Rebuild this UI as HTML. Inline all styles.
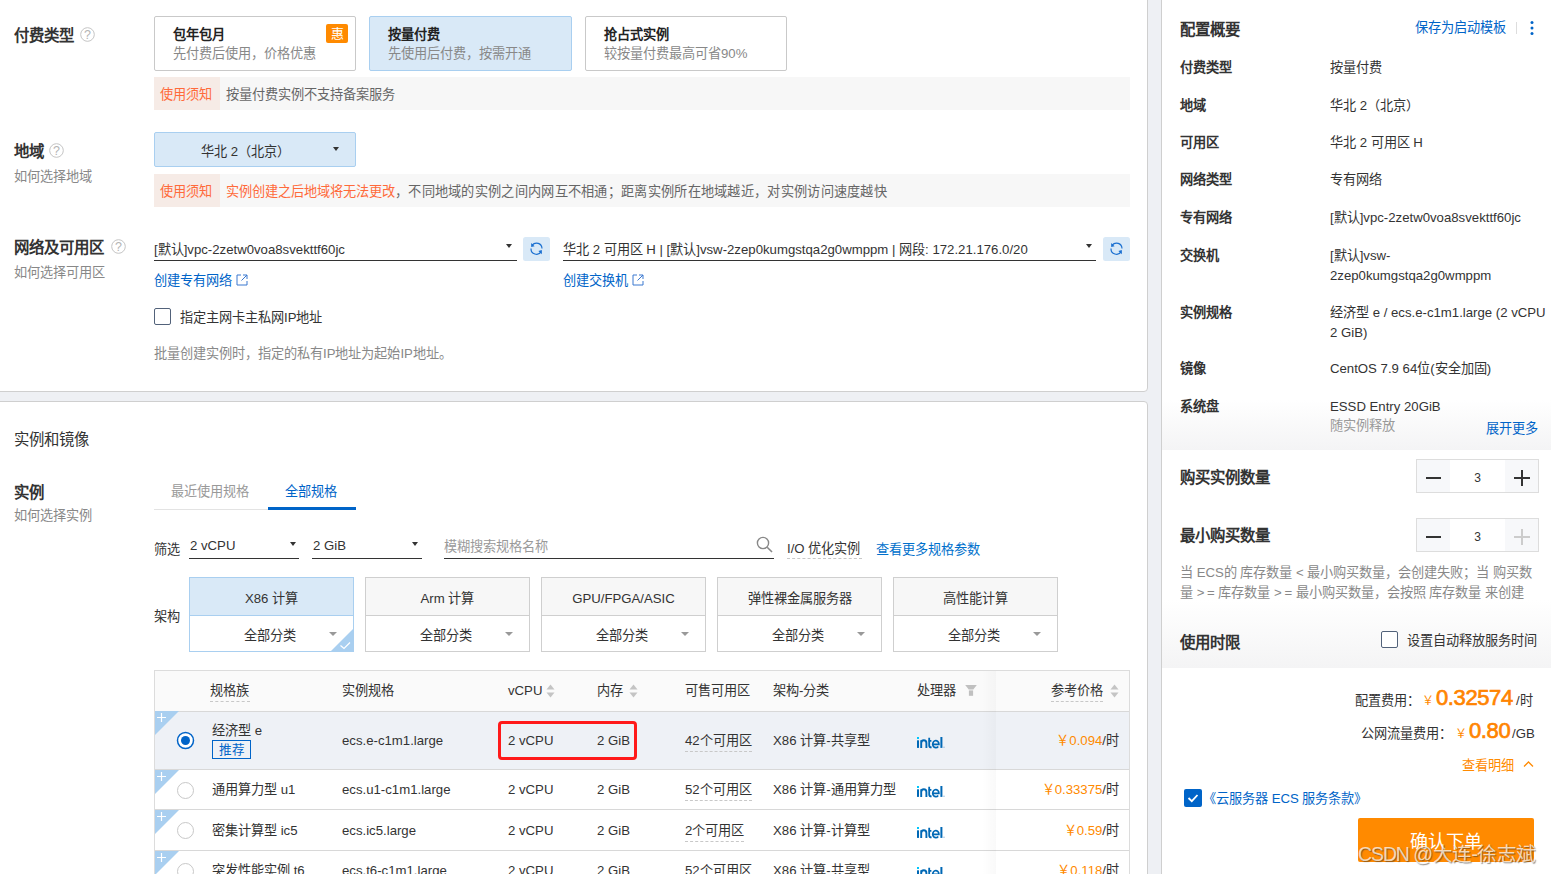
<!DOCTYPE html>
<html lang="zh-CN"><head><meta charset="utf-8">
<style>
*{box-sizing:border-box}
html,body{margin:0;padding:0}
body{width:1551px;height:874px;overflow:hidden;position:relative;background:#eef0f4;font-family:"Liberation Sans",sans-serif;color:#333;font-size:13.2px}
.a{position:absolute}
.t{position:absolute;white-space:nowrap;line-height:1}
.card{position:absolute;background:#fff;border:1px solid #cfcfcf}
.lbl{font-size:15.4px;font-weight:bold;color:#333}
.sub{color:#888}
.blue{color:#0064c8}
.q{display:inline-block;width:14px;height:14px;border:1px solid #bbb;border-radius:50%;color:#aaa;font-size:11px;line-height:12px;text-align:center;font-weight:normal;vertical-align:top}
</style></head><body>

<!-- card 1 -->
<div class="card" style="left:-5px;top:-10px;width:1153px;height:402px;border-radius:0 0 4px 4px"></div>
<!-- card 2 -->
<div class="card" style="left:-5px;top:401px;width:1153px;height:500px;border-radius:4px 4px 0 0"></div>
<!-- right panel -->
<div class="a" style="left:1161px;top:-5px;width:400px;height:900px;background:#fff;border-left:1px solid #cfcfcf"></div>

<!-- ===== Section: 付费类型 ===== -->
<div class="t lbl" style="left:14px;top:28px">付费类型</div>
<svg class="a" style="left:80px;top:27px" width="15" height="15" viewBox="0 0 15 15"><circle cx="7.5" cy="7.5" r="6.8" fill="none" stroke="#c4c4c4" stroke-width="1"/><text x="7.5" y="12" text-anchor="middle" font-size="12.5" fill="#b4b4b4" font-family="Liberation Sans">?</text></svg>

<div class="a" style="left:154px;top:16px;width:202px;height:55px;border:1px solid #c9c9c9;border-radius:2px;background:#fff"></div>
<div class="t" style="left:173px;top:28px;font-weight:bold;color:#222">包年包月</div>
<div class="t sub" style="left:173px;top:47px;color:#888">先付费后使用，价格优惠</div>
<div class="a" style="left:326px;top:24px;width:22px;height:19px;background:#ff8a00;border-radius:2px;color:#fff;font-size:13px;line-height:19px;text-align:center">惠</div>

<div class="a" style="left:369px;top:16px;width:203px;height:55px;border:1px solid #a9cff0;border-radius:2px;background:#d9e9f7"></div>
<div class="t" style="left:388px;top:28px;font-weight:bold;color:#222">按量付费</div>
<div class="t" style="left:388px;top:47px;color:#888">先使用后付费，按需开通</div>

<div class="a" style="left:585px;top:16px;width:202px;height:55px;border:1px solid #c9c9c9;border-radius:2px;background:#fff"></div>
<div class="t" style="left:604px;top:28px;font-weight:bold;color:#222">抢占式实例</div>
<div class="t" style="left:604px;top:47px;color:#888">较按量付费最高可省90%</div>

<div class="a" style="left:154px;top:77px;width:976px;height:33px;background:#f7f7f7"></div>
<div class="a" style="left:154px;top:77px;width:66px;height:33px;background:#f6ebe6"></div>
<div class="t" style="left:160px;top:88px;color:#ff6a3a">使用须知</div>
<div class="t" style="left:226px;top:88px;color:#666">按量付费实例不支持备案服务</div>

<!-- ===== Section: 地域 ===== -->
<div class="t lbl" style="left:14px;top:144px">地域</div>
<svg class="a" style="left:49px;top:143px" width="15" height="15" viewBox="0 0 15 15"><circle cx="7.5" cy="7.5" r="6.8" fill="none" stroke="#c4c4c4" stroke-width="1"/><text x="7.5" y="12" text-anchor="middle" font-size="12.5" fill="#b4b4b4" font-family="Liberation Sans">?</text></svg>
<div class="t" style="left:14px;top:170px;color:#888">如何选择地域</div>
<div class="a" style="left:154px;top:132px;width:202px;height:35px;border:1px solid #a9cff0;border-radius:2px;background:#d9e9f7"></div>
<div class="t" style="left:201px;top:145px;color:#333">华北 2（北京）</div>
<div class="a" style="left:333px;top:147px;width:0;height:0;border-left:3.5px solid transparent;border-right:3.5px solid transparent;border-top:4px solid #333"></div>

<div class="a" style="left:154px;top:174px;width:976px;height:33px;background:#f7f7f7"></div>
<div class="a" style="left:154px;top:174px;width:66px;height:33px;background:#f6ebe6"></div>
<div class="t" style="left:160px;top:185px;color:#ff6a3a">使用须知</div>
<div class="t" style="left:226px;top:185px;color:#666"><span style="color:#ff6a3a">实例创建之后地域将无法更改</span><span style="letter-spacing:0.3px">，不同地域的实例之间内网互不相通；距离实例所在地域越近，对实例访问速度越快</span></div>

<!-- ===== Section: 网络及可用区 ===== -->
<div class="t lbl" style="left:14px;top:240px">网络及可用区</div>
<svg class="a" style="left:111px;top:239px" width="15" height="15" viewBox="0 0 15 15"><circle cx="7.5" cy="7.5" r="6.8" fill="none" stroke="#c4c4c4" stroke-width="1"/><text x="7.5" y="12" text-anchor="middle" font-size="12.5" fill="#b4b4b4" font-family="Liberation Sans">?</text></svg>
<div class="t" style="left:14px;top:266px;color:#888">如何选择可用区</div>

<div class="t" style="left:154px;top:243px;color:#333">[默认]vpc-2zetw0voa8svekttf60jc</div>
<div class="a" style="left:154px;top:260px;width:363px;height:1px;background:#333"></div>
<div class="a" style="left:506px;top:244px;width:0;height:0;border-left:3.5px solid transparent;border-right:3.5px solid transparent;border-top:4px solid #333"></div>
<div class="a" style="left:523px;top:237px"><svg width="27" height="24" viewBox="0 0 27 24"><rect width="27" height="24" rx="2.5" fill="#d9e9f7"/><path d="M19 11.5 A5.5 5.5 0 0 0 9.2 8.2" fill="none" stroke="#1a6fd0" stroke-width="1.15"/><path d="M8 11.5 A5.5 5.5 0 0 0 18.2 14.6" fill="none" stroke="#1a6fd0" stroke-width="1.15"/><path d="M8.2 6 L8.2 10 L11.6 9.2 Z" fill="#1a6fd0"/><path d="M18.8 17.2 L18.8 13 L15.4 14 Z" fill="#1a6fd0"/></svg></div>

<div class="t" style="left:563px;top:243px;color:#333">华北 2 可用区 H | [默认]vsw-2zep0kumgstqa2g0wmppm | 网段: 172.21.176.0/20</div>
<div class="a" style="left:563px;top:260px;width:533px;height:1px;background:#333"></div>
<div class="a" style="left:1086px;top:244px;width:0;height:0;border-left:3.5px solid transparent;border-right:3.5px solid transparent;border-top:4px solid #333"></div>
<div class="a" style="left:1103px;top:237px"><svg width="27" height="24" viewBox="0 0 27 24"><rect width="27" height="24" rx="2.5" fill="#d9e9f7"/><path d="M19 11.5 A5.5 5.5 0 0 0 9.2 8.2" fill="none" stroke="#1a6fd0" stroke-width="1.15"/><path d="M8 11.5 A5.5 5.5 0 0 0 18.2 14.6" fill="none" stroke="#1a6fd0" stroke-width="1.15"/><path d="M8.2 6 L8.2 10 L11.6 9.2 Z" fill="#1a6fd0"/><path d="M18.8 17.2 L18.8 13 L15.4 14 Z" fill="#1a6fd0"/></svg></div>

<div class="t" style="left:154px;top:274px;color:#0064c8">创建专有网络 <svg width="12" height="12" viewBox="0 0 12 12" style="vertical-align:top"><path d="M5 1 H1 V11 H11 V7" fill="none" stroke="#3a78d0" stroke-width="1"/><path d="M7 1 H11 V5 M11 1 L5.5 6.5" fill="none" stroke="#3a78d0" stroke-width="1"/></svg></div>
<div class="t" style="left:563px;top:274px;color:#0064c8">创建交换机 <svg width="12" height="12" viewBox="0 0 12 12" style="vertical-align:top"><path d="M5 1 H1 V11 H11 V7" fill="none" stroke="#3a78d0" stroke-width="1"/><path d="M7 1 H11 V5 M11 1 L5.5 6.5" fill="none" stroke="#3a78d0" stroke-width="1"/></svg></div>

<div class="a" style="left:154px;top:308px;width:17px;height:17px;border:1px solid #52627a;border-radius:2px;background:#fff"></div>
<div class="t" style="left:180px;top:311px;color:#333">指定主网卡主私网IP地址</div>
<div class="t" style="left:154px;top:347px;color:#888">批量创建实例时，指定的私有IP地址为起始IP地址。</div>

<!-- ===== Section: 实例和镜像 ===== -->
<div class="t" style="left:14px;top:432px;font-size:15.4px;color:#333">实例和镜像</div>
<div class="t lbl" style="left:14px;top:485px">实例</div>
<div class="t" style="left:14px;top:509px;color:#888">如何选择实例</div>

<div class="a" style="left:154px;top:509px;width:202px;height:1px;background:#e3e3e3"></div>
<div class="a" style="left:268px;top:507px;width:88px;height:3px;background:#0064c8"></div>
<div class="t" style="left:171px;top:485px;color:#999">最近使用规格</div>
<div class="t" style="left:285px;top:485px;color:#0064c8">全部规格</div>

<div class="t" style="left:154px;top:543px;color:#333">筛选</div>
<div class="t" style="left:190px;top:539px;color:#333">2 vCPU</div>
<div class="a" style="left:189px;top:558px;width:110px;height:1px;background:#333"></div>
<div class="a" style="left:290px;top:542px;width:0;height:0;border-left:3.5px solid transparent;border-right:3.5px solid transparent;border-top:4px solid #333"></div>
<div class="t" style="left:313px;top:539px;color:#333">2 GiB</div>
<div class="a" style="left:312px;top:558px;width:110px;height:1px;background:#333"></div>
<div class="a" style="left:412px;top:542px;width:0;height:0;border-left:3.5px solid transparent;border-right:3.5px solid transparent;border-top:4px solid #333"></div>
<div class="t" style="left:444px;top:540px;color:#999">模糊搜索规格名称</div>
<div class="a" style="left:444px;top:558px;width:330px;height:1px;background:#333"></div>
<svg class="a" style="left:755px;top:535px" width="20" height="20" viewBox="0 0 20 20"><circle cx="8" cy="8" r="5.6" fill="none" stroke="#888" stroke-width="1.4"/><path d="M12.2 12.2 L17 17" stroke="#888" stroke-width="1.6"/></svg>
<div class="t" style="left:787px;top:542px;color:#333">I/O 优化实例</div>
<div class="a" style="left:787px;top:558px;width:75px;height:0;border-top:1px dashed #c8c8c8"></div>
<div class="t" style="left:876px;top:543px;color:#0070cc">查看更多规格参数</div>

<div class="t" style="left:154px;top:610px;color:#333">架构</div>
<div class="a" style="left:189px;top:577px;width:165px;height:75px;border:1px solid #a9cff0;background:#fff"></div>
<div class="a" style="left:190px;top:578px;width:163px;height:38px;background:#d9e9f7;border-bottom:1px solid #a9cff0"></div>
<div class="t" style="left:189px;width:165px;text-align:center;top:592px;color:#333">X86 计算</div>
<div class="t" style="left:244px;top:629px;color:#333">全部分类</div>
<div class="a" style="left:329px;top:632px;width:0;height:0;border-left:4px solid transparent;border-right:4px solid transparent;border-top:4.5px solid #999"></div>
<div class="a" style="left:365px;top:577px;width:165px;height:75px;border:1px solid #cfcfcf;background:#fff"></div>
<div class="a" style="left:366px;top:578px;width:163px;height:38px;background:#f7f7f7;border-bottom:1px solid #cfcfcf"></div>
<div class="t" style="left:365px;width:165px;text-align:center;top:592px;color:#333">Arm 计算</div>
<div class="t" style="left:420px;top:629px;color:#333">全部分类</div>
<div class="a" style="left:505px;top:632px;width:0;height:0;border-left:4px solid transparent;border-right:4px solid transparent;border-top:4.5px solid #999"></div>
<div class="a" style="left:541px;top:577px;width:165px;height:75px;border:1px solid #cfcfcf;background:#fff"></div>
<div class="a" style="left:542px;top:578px;width:163px;height:38px;background:#f7f7f7;border-bottom:1px solid #cfcfcf"></div>
<div class="t" style="left:541px;width:165px;text-align:center;top:592px;color:#333">GPU/FPGA/ASIC</div>
<div class="t" style="left:596px;top:629px;color:#333">全部分类</div>
<div class="a" style="left:681px;top:632px;width:0;height:0;border-left:4px solid transparent;border-right:4px solid transparent;border-top:4.5px solid #999"></div>
<div class="a" style="left:717px;top:577px;width:165px;height:75px;border:1px solid #cfcfcf;background:#fff"></div>
<div class="a" style="left:718px;top:578px;width:163px;height:38px;background:#f7f7f7;border-bottom:1px solid #cfcfcf"></div>
<div class="t" style="left:717px;width:165px;text-align:center;top:592px;color:#333">弹性裸金属服务器</div>
<div class="t" style="left:772px;top:629px;color:#333">全部分类</div>
<div class="a" style="left:857px;top:632px;width:0;height:0;border-left:4px solid transparent;border-right:4px solid transparent;border-top:4.5px solid #999"></div>
<div class="a" style="left:893px;top:577px;width:165px;height:75px;border:1px solid #cfcfcf;background:#fff"></div>
<div class="a" style="left:894px;top:578px;width:163px;height:38px;background:#f7f7f7;border-bottom:1px solid #cfcfcf"></div>
<div class="t" style="left:893px;width:165px;text-align:center;top:592px;color:#333">高性能计算</div>
<div class="t" style="left:948px;top:629px;color:#333">全部分类</div>
<div class="a" style="left:1033px;top:632px;width:0;height:0;border-left:4px solid transparent;border-right:4px solid transparent;border-top:4.5px solid #999"></div>

<svg class="a" style="left:330px;top:628px" width="24" height="24" viewBox="0 0 24 24"><path d="M24 0 L24 24 L0 24 Z" fill="#a9cff0"/><path d="M10.5 17.5 L14 20.5 L20 14.5" fill="none" stroke="#fff" stroke-width="1.2"/></svg>

<!-- ===== Table ===== -->
<div class="a" style="left:154px;top:670px;width:976px;height:230px;border:1px solid #dcdcdc;background:#fff"></div>
<div class="a" style="left:155px;top:671px;width:974px;height:41px;background:#fafafa;border-bottom:1px solid #d8d8d8"></div>
<div class="a" style="left:155px;top:712px;width:974px;height:58px;background:#eef1f6;border-bottom:1px solid #d8d8d8"></div>
<div class="a" style="left:155px;top:770px;width:974px;height:40px;background:#fff;border-bottom:1px solid #d8d8d8"></div>
<div class="a" style="left:155px;top:810px;width:974px;height:41px;background:#fff;border-bottom:1px solid #d8d8d8"></div>
<div class="a" style="left:155px;top:851px;width:974px;height:41px;background:#fff;border-bottom:1px solid #d8d8d8"></div>
<div class="a" style="left:982px;top:671px;width:14px;height:230px;background:linear-gradient(to right,rgba(0,0,0,0),rgba(0,0,0,0.025))"></div>
<div class="t" style="left:210px;top:684px;color:#333">规格族</div>
<div class="a" style="left:210px;top:701px;width:40px;height:0;border-top:1px dashed #c8c8c8"></div>
<div class="t" style="left:342px;top:684px;color:#333">实例规格</div>
<div class="t" style="left:508px;top:684px;color:#333">vCPU</div>
<svg class="a" style="left:546px;top:684px" width="9" height="14" viewBox="0 0 9 14"><path d="M4.5 0.5 L8.5 5.5 L0.5 5.5 Z" fill="#c4c4c4"/><path d="M4.5 13.5 L8.5 8.5 L0.5 8.5 Z" fill="#c4c4c4"/></svg>
<div class="t" style="left:597px;top:684px;color:#333">内存</div>
<svg class="a" style="left:629px;top:684px" width="9" height="14" viewBox="0 0 9 14"><path d="M4.5 0.5 L8.5 5.5 L0.5 5.5 Z" fill="#c4c4c4"/><path d="M4.5 13.5 L8.5 8.5 L0.5 8.5 Z" fill="#c4c4c4"/></svg>
<div class="t" style="left:685px;top:684px;color:#333">可售可用区</div>
<div class="t" style="left:773px;top:684px;color:#333">架构-分类</div>
<div class="t" style="left:917px;top:684px;color:#333">处理器</div>
<svg class="a" style="left:965px;top:685px" width="12" height="11" viewBox="0 0 12 11"><path d="M0.2 0 H11.8 L8.3 4.6 H3.7 Z" fill="#c0c0c0"/><rect x="3.9" y="5.4" width="4.2" height="5.4" fill="#c0c0c0"/></svg>
<div class="t" style="left:1051px;top:684px;color:#333">参考价格</div>
<div class="a" style="left:1051px;top:701px;width:52px;height:0;border-top:1px dashed #c8c8c8"></div>
<svg class="a" style="left:1110px;top:684px" width="9" height="14" viewBox="0 0 9 14"><path d="M4.5 0.5 L8.5 5.5 L0.5 5.5 Z" fill="#c4c4c4"/><path d="M4.5 13.5 L8.5 8.5 L0.5 8.5 Z" fill="#c4c4c4"/></svg><svg class="a" style="left:155px;top:711px" width="24" height="24" viewBox="0 0 24 24"><path d="M0 0 L24 0 L0 24 Z" fill="#a9cff0"/><path d="M2 6.5 H11 M6.5 2 V11" stroke="#fff" stroke-width="1.2"/></svg><svg class="a" style="left:176px;top:731.0px" width="19" height="19" viewBox="0 0 19 19"><circle cx="9.5" cy="9.5" r="8" fill="#fff" stroke="#0064c8" stroke-width="1.5"/><circle cx="9.5" cy="9.5" r="4.5" fill="#0064c8"/></svg><div class="t" style="left:212px;top:724px;color:#333">经济型 e</div><div class="a" style="left:212px;top:740px;width:39px;height:19px;border:1px solid #0064c8;color:#0064c8;line-height:18px;text-align:center;font-size:12.6px">推荐</div><div class="t" style="left:342px;top:734px;color:#333">ecs.e-c1m1.large</div><div class="t" style="left:508px;top:734px;color:#333">2 vCPU</div><div class="t" style="left:597px;top:734px;color:#333">2 GiB</div><div class="t" style="left:685px;top:734px;color:#333;border-bottom:1px dashed #c8c8c8;padding-bottom:4px">42个可用区</div><div class="t" style="left:773px;top:734px;color:#333">X86 计算-共享型</div><svg class="a" style="left:916px;top:736px" width="30" height="14" viewBox="0 0 30 14"><rect x="1" y="1" width="2" height="2" fill="#00c7fd"/><rect x="1" y="4.3" width="2" height="7.6" fill="#0068b5"/><path d="M5.2 11.9 V4.3 M5.2 6.8 Q5.4 4.3 7.8 4.3 Q10.4 4.3 10.4 7 V11.9" fill="none" stroke="#0068b5" stroke-width="1.9"/><path d="M13.2 1.8 V9.4 Q13.2 11.4 15.6 11.4 M12.2 4.9 H15.4" fill="none" stroke="#0068b5" stroke-width="1.8"/><path d="M16.9 8.3 H22.9 A3.1 3.5 0 1 0 22.2 10.4" fill="none" stroke="#0068b5" stroke-width="1.7"/><rect x="24.4" y="1" width="2" height="10.9" fill="#0068b5"/><circle cx="28" cy="11.2" r="0.7" fill="#8fb8dd"/></svg><div class="t" style="right:432px;top:734px;color:#333"><span style="color:#ff8a00">￥0.094</span>/时</div>
<svg class="a" style="left:155px;top:770px" width="24" height="24" viewBox="0 0 24 24"><path d="M0 0 L24 0 L0 24 Z" fill="#a9cff0"/><path d="M2 6.5 H11 M6.5 2 V11" stroke="#fff" stroke-width="1.2"/></svg><svg class="a" style="left:176px;top:780.5px" width="19" height="19" viewBox="0 0 19 19"><circle cx="9.5" cy="9.5" r="8" fill="#fff" stroke="#c8c8c8" stroke-width="1"/></svg><div class="t" style="left:212px;top:783px;color:#333">通用算力型 u1</div><div class="t" style="left:342px;top:783px;color:#333">ecs.u1-c1m1.large</div><div class="t" style="left:508px;top:783px;color:#333">2 vCPU</div><div class="t" style="left:597px;top:783px;color:#333">2 GiB</div><div class="t" style="left:685px;top:783px;color:#333;border-bottom:1px dashed #c8c8c8;padding-bottom:4px">52个可用区</div><div class="t" style="left:773px;top:783px;color:#333">X86 计算-通用算力型</div><svg class="a" style="left:916px;top:785px" width="30" height="14" viewBox="0 0 30 14"><rect x="1" y="1" width="2" height="2" fill="#00c7fd"/><rect x="1" y="4.3" width="2" height="7.6" fill="#0068b5"/><path d="M5.2 11.9 V4.3 M5.2 6.8 Q5.4 4.3 7.8 4.3 Q10.4 4.3 10.4 7 V11.9" fill="none" stroke="#0068b5" stroke-width="1.9"/><path d="M13.2 1.8 V9.4 Q13.2 11.4 15.6 11.4 M12.2 4.9 H15.4" fill="none" stroke="#0068b5" stroke-width="1.8"/><path d="M16.9 8.3 H22.9 A3.1 3.5 0 1 0 22.2 10.4" fill="none" stroke="#0068b5" stroke-width="1.7"/><rect x="24.4" y="1" width="2" height="10.9" fill="#0068b5"/><circle cx="28" cy="11.2" r="0.7" fill="#8fb8dd"/></svg><div class="t" style="right:432px;top:783px;color:#333"><span style="color:#ff8a00">￥0.33375</span>/时</div>
<svg class="a" style="left:155px;top:810px" width="24" height="24" viewBox="0 0 24 24"><path d="M0 0 L24 0 L0 24 Z" fill="#a9cff0"/><path d="M2 6.5 H11 M6.5 2 V11" stroke="#fff" stroke-width="1.2"/></svg><svg class="a" style="left:176px;top:821.0px" width="19" height="19" viewBox="0 0 19 19"><circle cx="9.5" cy="9.5" r="8" fill="#fff" stroke="#c8c8c8" stroke-width="1"/></svg><div class="t" style="left:212px;top:824px;color:#333">密集计算型 ic5</div><div class="t" style="left:342px;top:824px;color:#333">ecs.ic5.large</div><div class="t" style="left:508px;top:824px;color:#333">2 vCPU</div><div class="t" style="left:597px;top:824px;color:#333">2 GiB</div><div class="t" style="left:685px;top:824px;color:#333;border-bottom:1px dashed #c8c8c8;padding-bottom:4px">2个可用区</div><div class="t" style="left:773px;top:824px;color:#333">X86 计算-计算型</div><svg class="a" style="left:916px;top:826px" width="30" height="14" viewBox="0 0 30 14"><rect x="1" y="1" width="2" height="2" fill="#00c7fd"/><rect x="1" y="4.3" width="2" height="7.6" fill="#0068b5"/><path d="M5.2 11.9 V4.3 M5.2 6.8 Q5.4 4.3 7.8 4.3 Q10.4 4.3 10.4 7 V11.9" fill="none" stroke="#0068b5" stroke-width="1.9"/><path d="M13.2 1.8 V9.4 Q13.2 11.4 15.6 11.4 M12.2 4.9 H15.4" fill="none" stroke="#0068b5" stroke-width="1.8"/><path d="M16.9 8.3 H22.9 A3.1 3.5 0 1 0 22.2 10.4" fill="none" stroke="#0068b5" stroke-width="1.7"/><rect x="24.4" y="1" width="2" height="10.9" fill="#0068b5"/><circle cx="28" cy="11.2" r="0.7" fill="#8fb8dd"/></svg><div class="t" style="right:432px;top:824px;color:#333"><span style="color:#ff8a00">￥0.59</span>/时</div>
<svg class="a" style="left:155px;top:851px" width="24" height="24" viewBox="0 0 24 24"><path d="M0 0 L24 0 L0 24 Z" fill="#a9cff0"/><path d="M2 6.5 H11 M6.5 2 V11" stroke="#fff" stroke-width="1.2"/></svg><svg class="a" style="left:176px;top:862.0px" width="19" height="19" viewBox="0 0 19 19"><circle cx="9.5" cy="9.5" r="8" fill="#fff" stroke="#c8c8c8" stroke-width="1"/></svg><div class="t" style="left:212px;top:864px;color:#333">突发性能实例 t6</div><div class="t" style="left:342px;top:864px;color:#333">ecs.t6-c1m1.large</div><div class="t" style="left:508px;top:864px;color:#333">2 vCPU</div><div class="t" style="left:597px;top:864px;color:#333">2 GiB</div><div class="t" style="left:685px;top:864px;color:#333;border-bottom:1px dashed #c8c8c8;padding-bottom:4px">52个可用区</div><div class="t" style="left:773px;top:864px;color:#333">X86 计算-共享型</div><svg class="a" style="left:916px;top:866px" width="30" height="14" viewBox="0 0 30 14"><rect x="1" y="1" width="2" height="2" fill="#00c7fd"/><rect x="1" y="4.3" width="2" height="7.6" fill="#0068b5"/><path d="M5.2 11.9 V4.3 M5.2 6.8 Q5.4 4.3 7.8 4.3 Q10.4 4.3 10.4 7 V11.9" fill="none" stroke="#0068b5" stroke-width="1.9"/><path d="M13.2 1.8 V9.4 Q13.2 11.4 15.6 11.4 M12.2 4.9 H15.4" fill="none" stroke="#0068b5" stroke-width="1.8"/><path d="M16.9 8.3 H22.9 A3.1 3.5 0 1 0 22.2 10.4" fill="none" stroke="#0068b5" stroke-width="1.7"/><rect x="24.4" y="1" width="2" height="10.9" fill="#0068b5"/><circle cx="28" cy="11.2" r="0.7" fill="#8fb8dd"/></svg><div class="t" style="right:432px;top:864px;color:#333"><span style="color:#ff8a00">￥0.118</span>/时</div>
<div class="a" style="left:498px;top:721px;width:139px;height:39px;border:3px solid #ff1a1a;border-radius:4px"></div>

<!-- ===== Right panel ===== -->
<div class="a" style="left:1162px;top:400px;width:389px;height:50px;background:linear-gradient(to bottom,rgba(245,245,245,0),#f4f4f5)"></div>
<div class="a" style="left:1162px;top:600px;width:389px;height:68px;background:linear-gradient(to bottom,rgba(245,245,245,0),#f4f4f5)"></div>
<div class="t" style="left:1180px;top:22px;font-size:15.4px;font-weight:bold;color:#333">配置概要</div>
<div class="t" style="left:1415px;top:21px;color:#0064c8">保存为启动模板</div>
<div class="a" style="left:1516px;top:22px;width:1px;height:12px;background:#ddd"></div>
<svg class="a" style="left:1529px;top:19.5px" width="6" height="16" viewBox="0 0 6 16"><circle cx="3" cy="2.5" r="1.5" fill="#0064c8"/><circle cx="3" cy="8" r="1.5" fill="#0064c8"/><circle cx="3" cy="13.5" r="1.5" fill="#0064c8"/></svg>
<div class="t" style="left:1180px;top:61px;font-weight:bold;color:#333">付费类型</div>
<div class="t" style="left:1330px;top:61px;color:#333">按量付费</div>
<div class="t" style="left:1180px;top:99px;font-weight:bold;color:#333">地域</div>
<div class="t" style="left:1330px;top:99px;color:#333">华北 2（北京）</div>
<div class="t" style="left:1180px;top:136px;font-weight:bold;color:#333">可用区</div>
<div class="t" style="left:1330px;top:136px;color:#333">华北 2 可用区 H</div>
<div class="t" style="left:1180px;top:173px;font-weight:bold;color:#333">网络类型</div>
<div class="t" style="left:1330px;top:173px;color:#333">专有网络</div>
<div class="t" style="left:1180px;top:211px;font-weight:bold;color:#333">专有网络</div>
<div class="t" style="left:1330px;top:211px;color:#333">[默认]vpc-2zetw0voa8svekttf60jc</div>
<div class="t" style="left:1180px;top:249px;font-weight:bold;color:#333">交换机</div>
<div class="t" style="left:1330px;top:249px;color:#333">[默认]vsw-</div>
<div class="t" style="left:1330px;top:269px;color:#333">2zep0kumgstqa2g0wmppm</div>
<div class="t" style="left:1180px;top:306px;font-weight:bold;color:#333">实例规格</div>
<div class="t" style="left:1330px;top:306px;color:#333">经济型 e / ecs.e-c1m1.large (2 vCPU</div>
<div class="t" style="left:1330px;top:326px;color:#333">2 GiB)</div>
<div class="t" style="left:1180px;top:362px;font-weight:bold;color:#333">镜像</div>
<div class="t" style="left:1330px;top:362px;color:#333">CentOS 7.9 64位(安全加固)</div>
<div class="t" style="left:1180px;top:400px;font-weight:bold;color:#333">系统盘</div>
<div class="t" style="left:1330px;top:400px;color:#333">ESSD Entry 20GiB</div>
<div class="t" style="left:1330px;top:419px;color:#999">随实例释放</div>
<div class="t" style="left:1486px;top:422px;color:#0064c8">展开更多</div>

<div class="t" style="left:1180px;top:470px;font-size:15.4px;font-weight:bold;color:#333">购买实例数量</div>
<div class="t" style="left:1180px;top:528px;font-size:15.4px;font-weight:bold;color:#333">最小购买数量</div>
<div class="a" style="left:1416px;top:459px;width:123px;height:34px;border:1px solid #ddd;background:#fff"></div>
<div class="a" style="left:1417px;top:460px;width:33px;height:32px;background:#f7f8fa"></div>
<div class="a" style="left:1505px;top:460px;width:33px;height:32px;background:#f7f8fa"></div>
<div class="a" style="left:1426px;top:477px;width:15px;height:1.5px;background:#333"></div>
<div class="a" style="left:1514px;top:477px;width:16px;height:1.5px;background:#333"></div>
<div class="a" style="left:1521.3px;top:470px;width:1.5px;height:16px;background:#333"></div>
<div class="t" style="left:1450px;width:55px;text-align:center;top:472px;font-size:12px;color:#333">3</div>
<div class="a" style="left:1416px;top:518px;width:123px;height:34px;border:1px solid #ddd;background:#fff"></div>
<div class="a" style="left:1417px;top:519px;width:33px;height:32px;background:#f7f8fa"></div>
<div class="a" style="left:1505px;top:519px;width:33px;height:32px;background:#f7f8fa"></div>
<div class="a" style="left:1426px;top:536px;width:15px;height:1.5px;background:#333"></div>
<div class="a" style="left:1514px;top:536px;width:16px;height:1.5px;background:#ccc"></div>
<div class="a" style="left:1521.3px;top:529px;width:1.5px;height:16px;background:#ccc"></div>
<div class="t" style="left:1450px;width:55px;text-align:center;top:531px;font-size:12px;color:#333">3</div>
<div class="t" style="left:1180px;top:566px;color:#888">当 ECS的 库存数量 &lt; 最小购买数量，会创建失败；当 购买数</div>
<div class="t" style="left:1180px;top:586px;color:#888">量 &gt;&#8201;= 库存数量 &gt;&#8201;= 最小购买数量，会按照 库存数量 来创建</div>

<div class="t" style="left:1180px;top:635px;font-size:15.4px;font-weight:bold;color:#333">使用时限</div>
<div class="a" style="left:1381px;top:631px;width:17px;height:17px;border:1px solid #52627a;border-radius:2px;background:#fff"></div>
<div class="t" style="left:1407px;top:634px;color:#333">设置自动释放服务时间</div>

<div class="t" style="left:1355px;top:694px;color:#333">配置费用：</div>
<div class="t" style="left:1422px;top:695px;color:#ff8a00;font-size:12px">￥</div>
<div class="t" style="left:1436px;top:687px;color:#ff8400;font-size:22px;-webkit-text-stroke:0.7px #ff8400;letter-spacing:-0.4px">0.32574</div>
<div class="t" style="left:1516px;top:694px;color:#333">/时</div>

<div class="t" style="left:1361px;top:727px;color:#333">公网流量费用：</div>
<div class="t" style="left:1455px;top:728px;color:#ff8a00;font-size:12px">￥</div>
<div class="t" style="left:1469px;top:720px;color:#ff8400;font-size:22px;-webkit-text-stroke:0.7px #ff8400;letter-spacing:-0.4px">0.80</div>
<div class="t" style="left:1512px;top:727px;color:#333">/GB</div>

<div class="t" style="left:1462px;top:759px;color:#ff8a00">查看明细</div>
<svg class="a" style="left:1523px;top:760px" width="11" height="8" viewBox="0 0 11 8"><path d="M1 6.5 L5.5 2 L10 6.5" fill="none" stroke="#ff8a00" stroke-width="1.3"/></svg>

<svg class="a" style="left:1184px;top:789px" width="18" height="18" viewBox="0 0 18 18"><rect width="18" height="18" rx="2" fill="#0064c8"/><path d="M4.5 9 L7.8 12.2 L13.5 6" fill="none" stroke="#fff" stroke-width="1.8"/></svg>
<div class="t" style="left:1203px;top:792px;color:#0064c8">《云服务器 ECS 服务条款》</div>

<div class="a" style="left:1358px;top:818px;width:176px;height:44px;background:#ff8a00;border-radius:2px"></div>
<div class="t" style="left:1358px;width:176px;text-align:center;top:833px;color:#fff;font-size:18px">确认下单</div>
<div class="t" style="left:1358px;top:845px;color:rgba(255,255,255,0.72);font-size:19.5px;text-shadow:1px 1px 1px rgba(60,50,40,0.55)"><span style="letter-spacing:-1.1px">CSDN @</span><span style="margin-left:1px;letter-spacing:-0.7px">大连-徐志斌</span></div>

</body></html>
